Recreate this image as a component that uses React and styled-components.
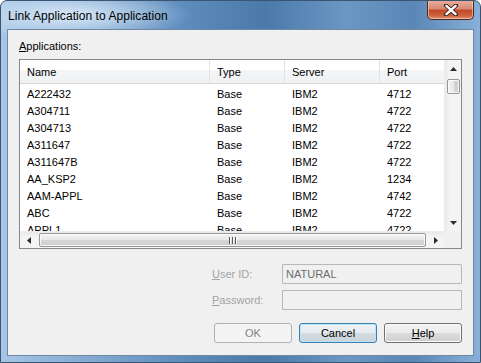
import React from "react";
import styled, { createGlobalStyle } from "styled-components";

const Global = createGlobalStyle`
  html, body { margin: 0; padding: 0; background: #ffffff; }
  body { font-family: "Liberation Sans", Arial, sans-serif; font-size: 11px; color: #000; }
  * { box-sizing: border-box; }
`;

const Window = styled.div`
  width: 481px;
  height: 363px;
  position: relative;
  border-radius: 7px 7px 0 0;
  border: 1px solid #3a5572;
  background:
    radial-gradient(ellipse 120px 26px at 70px 14px, rgba(220, 236, 250, 0.95), rgba(200, 225, 245, 0) 100%),
    linear-gradient(90deg, #a6c6e6 0%, #8fb3d8 12%, #5e8cbc 38%, #4a79aa 55%, #6b97c3 72%, #5a86b6 86%, #88b0d8 100%);
  display: flex;
  flex-direction: column;
  overflow: hidden;
`;

const TitleBar = styled.div`
  height: 28px;
  display: flex;
  align-items: flex-start;
  justify-content: space-between;
  padding-left: 7px;
`;

const Title = styled.div`
  font-size: 12px;
  line-height: 14px;
  margin-top: 8px;
  color: #000;
  letter-spacing: 0.05px;
`;

const CloseButton = styled.div`
  width: 47px;
  height: 20px;
  margin-top: -1px;
  margin-right: 6px;
  border: 1px solid #4a2a22;
  border-top: none;
  border-radius: 0 0 5px 5px;
  background: linear-gradient(180deg, #e8b1a0 0%, #d98a74 45%, #c3492b 55%, #cb5f3c 80%, #e09170 100%);
  box-shadow: inset 0 0 0 1px rgba(255, 220, 210, 0.55);
  display: flex;
  align-items: center;
  justify-content: center;
`;

const Client = styled.div`
  flex: 1;
  margin: 0 6px 6px 6px;
  border: 1px solid #6f87a0;
  background: #f0f0f0;
  padding: 10px 10px 12px 11px;
  display: flex;
  flex-direction: column;
`;

const GroupLabel = styled.div`
  line-height: 13px;
  margin-bottom: 6px;
`;

const U = styled.span`
  text-decoration: underline;
  text-underline-offset: 1px;
`;

const ListBox = styled.div`
  width: 443px;
  height: 190px;
  border: 1px solid #828790;
  background: #ffffff;
  display: grid;
  grid-template-columns: 1fr 17px;
  grid-template-rows: 1fr 17px;
  overflow: hidden;
`;

const View = styled.div`
  overflow: hidden;
  display: flex;
  flex-direction: column;
`;

const HeaderRow = styled.div`
  height: 24px;
  flex: none;
  display: grid;
  grid-template-columns: 190px 75px 95px 1fr;
  background: linear-gradient(180deg, #ffffff 0%, #ffffff 42%, #f4f5f7 43%, #f0f1f3 100%);
  border-bottom: 1px solid #d5d7db;
`;

const HeaderCell = styled.div`
  padding-left: 7px;
  display: flex;
  align-items: center;
  border-right: 1px solid #e1e3e6;
  &:last-child { border-right: none; }
`;

const Rows = styled.div`
  padding-top: 1px;
`;

const Row = styled.div`
  height: 17px;
  display: grid;
  grid-template-columns: 190px 75px 95px 1fr;
  align-items: center;
`;

const Cell = styled.div`
  padding-left: 7px;
  white-space: nowrap;
`;

const VScroll = styled.div`
  background: linear-gradient(90deg, #e9e9e9 0%, #f4f4f4 30%, #f4f4f4 100%);
  border-left: 1px solid #ececec;
  display: flex;
  flex-direction: column;
`;

const HScroll = styled.div`
  background: linear-gradient(180deg, #e9e9e9 0%, #f4f4f4 30%, #f4f4f4 100%);
  border-top: 1px solid #ececec;
  display: flex;
  align-items: stretch;
`;

const ArrowBox = styled.div`
  flex: none;
  width: ${(p) => (p.$h ? "17px" : "100%")};
  height: ${(p) => (p.$h ? "100%" : "17px")};
  display: flex;
  align-items: center;
  justify-content: center;
`;

const Track = styled.div`
  flex: 1;
  display: flex;
  flex-direction: ${(p) => (p.$h ? "row" : "column")};
  padding: ${(p) => (p.$h ? "1px 1px 1px 2px" : "2px 1px 1px 2px")};
`;

const Thumb = styled.div`
  border: 1px solid #969696;
  border-radius: 2px;
  background: ${(p) =>
    p.$h
      ? "linear-gradient(180deg, #f3f3f3 0%, #e8e8e8 50%, #d6d6d6 51%, #cfcfcf 100%)"
      : "linear-gradient(90deg, #f3f3f3 0%, #e8e8e8 50%, #d6d6d6 51%, #cfcfcf 100%)"};
  box-shadow: inset 0 0 0 1px rgba(255, 255, 255, 0.8);
  display: flex;
  align-items: center;
  justify-content: center;
  ${(p) => (p.$h ? "flex: 1;" : "height: 15px;")}
`;

const Grip = styled.div`
  display: flex;
  gap: 1px;
`;

const GripLine = styled.div`
  width: 1px;
  height: 7px;
  background: #555;
  box-shadow: 1px 0 0 #fff;
  margin-right: 1px;
`;

const Corner = styled.div`
  background: #f0f0f0;
`;

const Lower = styled.div`
  display: flex;
  flex-direction: column;
  align-items: flex-end;
  width: 443px;
  margin-top: 15px;
`;

const Fields = styled.div`
  width: 250px;
  display: grid;
  grid-template-columns: 70px 180px;
  row-gap: 6px;
  align-items: center;
`;

const FieldLabel = styled.div`
  color: #a3a3a3;
`;

const TextBox = styled.div`
  height: 20px;
  border: 1px solid #b7b7b7;
  border-radius: 1px;
  background: #f0f0f0;
  color: #6d6d6d;
  padding-left: 3px;
  display: flex;
  align-items: center;
`;

const Buttons = styled.div`
  margin-top: 13px;
  display: flex;
  gap: 7px;
`;

const Button = styled.div`
  width: 78px;
  height: 20px;
  border-radius: 3px;
  display: flex;
  align-items: center;
  justify-content: center;
  border: 1px solid ${(p) => (p.$disabled ? "#adb2b5" : p.$focus ? "#3c7fb1" : "#707070")};
  color: ${(p) => (p.$disabled ? "#838383" : "#000")};
  background: ${(p) =>
    p.$disabled
      ? "#f4f4f4"
      : p.$focus
      ? "linear-gradient(180deg, #eef3f7 0%, #e6ebef 50%, #d5dde3 51%, #c8d2da 100%)"
      : "linear-gradient(180deg, #f2f2f2 0%, #ebebeb 50%, #dddddd 51%, #cfcfcf 100%)"};
  box-shadow: inset 0 0 0 1px ${(p) => (p.$disabled ? "#f4f4f4" : p.$focus ? "#bfe4f8" : "#fcfcfc")};
`;

const data = [
  ["A222432", "Base", "IBM2", "4712"],
  ["A304711", "Base", "IBM2", "4722"],
  ["A304713", "Base", "IBM2", "4722"],
  ["A311647", "Base", "IBM2", "4722"],
  ["A311647B", "Base", "IBM2", "4722"],
  ["AA_KSP2", "Base", "IBM2", "1234"],
  ["AAM-APPL", "Base", "IBM2", "4742"],
  ["ABC", "Base", "IBM2", "4722"],
  ["APPL1", "Base", "IBM2", "4722"],
];

const Tri = ({ dir }) => {
  const pts = {
    up: "0,4 3.5,0 7,4",
    down: "0,0 3.5,4 7,0",
    left: "4,0 0,3.5 4,7",
    right: "0,0 4,3.5 0,7",
  }[dir];
  const vert = dir === "up" || dir === "down";
  return (
    <svg width={vert ? 7 : 4} height={vert ? 4 : 7} viewBox={vert ? "0 0 7 4" : "0 0 4 7"}>
      <polygon points={pts} fill="#2c2c2c" />
    </svg>
  );
};

export default function App() {
  return (
    <>
      <Global />
      <Window>
        <TitleBar>
          <Title>Link Application to Application</Title>
          <CloseButton>
            <svg width="16" height="12" viewBox="0 0 16 12">
              <path d="M3 1.5 L13 10.5 M13 1.5 L3 10.5" stroke="#3b2620" strokeWidth="4.2" strokeLinecap="round" />
              <path d="M3.4 1.9 L12.6 10.1 M12.6 1.9 L3.4 10.1" stroke="#ffffff" strokeWidth="2.4" strokeLinecap="round" />
            </svg>
          </CloseButton>
        </TitleBar>
        <Client>
          <GroupLabel>
            <U>A</U>pplications:
          </GroupLabel>
          <ListBox>
            <View>
              <HeaderRow>
                <HeaderCell>Name</HeaderCell>
                <HeaderCell>Type</HeaderCell>
                <HeaderCell>Server</HeaderCell>
                <HeaderCell>Port</HeaderCell>
              </HeaderRow>
              <Rows>
                {data.map((r) => (
                  <Row key={r[0]}>
                    {r.map((c, i) => (
                      <Cell key={i}>{c}</Cell>
                    ))}
                  </Row>
                ))}
              </Rows>
            </View>
            <VScroll>
              <ArrowBox>
                <Tri dir="up" />
              </ArrowBox>
              <Track>
                <Thumb />
              </Track>
              <ArrowBox>
                <Tri dir="down" />
              </ArrowBox>
            </VScroll>
            <HScroll>
              <ArrowBox $h>
                <Tri dir="left" />
              </ArrowBox>
              <Track $h>
                <Thumb $h>
                  <Grip>
                    <GripLine />
                    <GripLine />
                    <GripLine />
                  </Grip>
                </Thumb>
              </Track>
              <ArrowBox $h>
                <Tri dir="right" />
              </ArrowBox>
            </HScroll>
            <Corner />
          </ListBox>
          <Lower>
            <Fields>
              <FieldLabel>
                <U>U</U>ser ID:
              </FieldLabel>
              <TextBox>NATURAL</TextBox>
              <FieldLabel>
                <U>P</U>assword:
              </FieldLabel>
              <TextBox />
            </Fields>
            <Buttons>
              <Button $disabled>OK</Button>
              <Button $focus>Cancel</Button>
              <Button>
                <span>
                  <U>H</U>elp
                </span>
              </Button>
            </Buttons>
          </Lower>
        </Client>
      </Window>
    </>
  );
}
